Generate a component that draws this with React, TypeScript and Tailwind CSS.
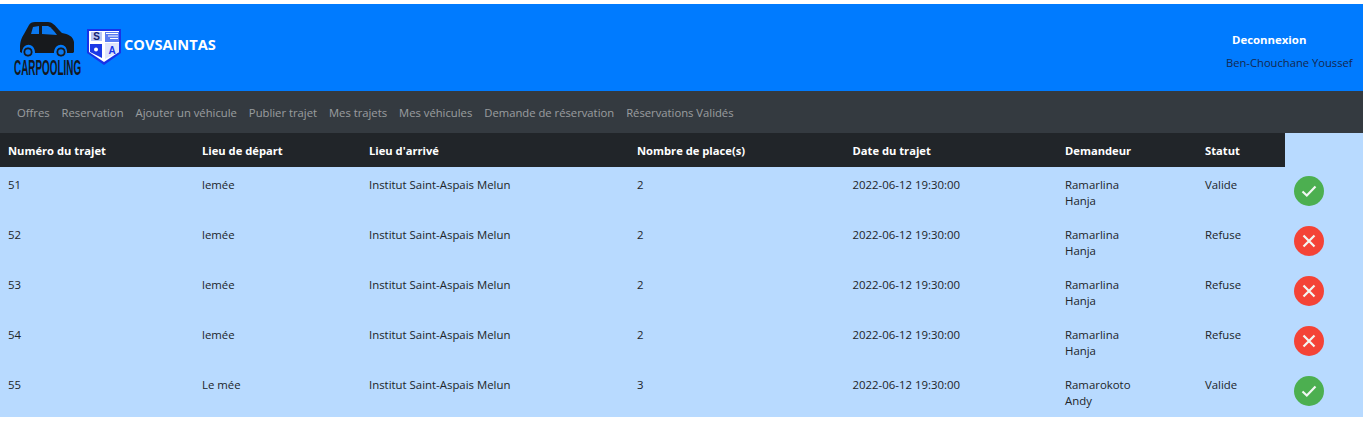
import React from "react";

const navLinks = [
  "Offres",
  "Reservation",
  "Ajouter un véhicule",
  "Publier trajet",
  "Mes trajets",
  "Mes véhicules",
  "Demande de réservation",
  "Réservations Validés",
];

const headers = [
  "Numéro du trajet",
  "Lieu de départ",
  "Lieu d'arrivé",
  "Nombre de place(s)",
  "Date du trajet",
  "Demandeur",
  "Statut",
];

const rows = [
  { id: 51, from: "lemée", seats: 2, first: "Ramarlina", last: "Hanja", status: "Valide" },
  { id: 52, from: "lemée", seats: 2, first: "Ramarlina", last: "Hanja", status: "Refuse" },
  { id: 53, from: "lemée", seats: 2, first: "Ramarlina", last: "Hanja", status: "Refuse" },
  { id: 54, from: "lemée", seats: 2, first: "Ramarlina", last: "Hanja", status: "Refuse" },
  { id: 55, from: "Le mée", seats: 3, first: "Ramarokoto", last: "Andy", status: "Valide" },
];

function CarLogo() {
  return (
    <div className="relative h-[56px] w-[68px]">
      <svg width="56" height="38" viewBox="0 0 56 38" className="absolute top-0 left-[6px]">
        <path
          d="M0 26 C0 19 2 15 4 12 L9 3 C10 1 12 0 15 0 L28 0 C32 0 35 3 39 8 L42 11 C48 12 53 14 54 20 L54 30 L53 31 L47 31 C48 20 34 20 34 31 L15 31 C15 20 2 20 2 31 L0 30 Z"
          fill="#17191c"
        />
        <path d="M13 5 L19 4 L19 12 L11 12 Z" fill="#0a78f0" />
        <path d="M22 4 L28 4 C31 5 34 9 37 13 L22 12 Z" fill="#0a78f0" />
        <circle cx="8" cy="30" r="5" fill="#17191c" stroke="#0a78f0" strokeWidth="1" />
        <circle cx="8" cy="30" r="3.5" fill="#0a78f0" stroke="#17191c" strokeWidth="1.5" />
        <circle cx="41" cy="30" r="5" fill="#17191c" stroke="#0a78f0" strokeWidth="1" />
        <circle cx="41" cy="30" r="3.5" fill="#0a78f0" stroke="#17191c" strokeWidth="1.5" />
      </svg>
      <span className="absolute top-[35px] left-0 origin-left scale-x-[0.45] font-['Liberation_Sans',sans-serif] text-[22px] leading-[22px] font-bold whitespace-nowrap text-[#14181f]">
        CARPOOLING
      </span>
    </div>
  );
}

function ShieldLogo() {
  return (
    <svg width="36" height="38" viewBox="0 0 36 38">
      <path d="M1 1 L35 1 L35 25 L18 37 L1 25 Z" fill="#1733e8" />
      <path d="M3 3 L33 3 L33 24 L18 34 L3 24 Z" fill="#fff" />
      <path d="M5 4 L16 4 L16 13 L5 13 Z" fill="#b9c6f5" />
      <path d="M19 4 L33 4 L33 14 L19 14 Z" fill="#5a7cf2" />
      <path d="M4 16 L16 16 L16 30 L4 24 Z" fill="#1b38e6" />
      <path d="M19 15 L33 15 L33 24 L19 31 Z" fill="#dfe4fb" />
      <path d="M20 5.5 H32 M22 8 H32 M24 10.5 H32" stroke="#fff" strokeWidth="1" />
      <text x="10.5" y="12" textAnchor="middle" fontSize="10" fontWeight="700" fill="#10206e" fontFamily="Liberation Sans">S</text>
      <text x="26" y="26" textAnchor="middle" fontSize="10" fontWeight="700" fill="#1733e8" fontFamily="Liberation Sans">A</text>
      <circle cx="10" cy="21.5" r="2" fill="#fff" />
    </svg>
  );
}

function StatusIcon({ status }: { status: string }) {
  const ok = status === "Valide";
  return (
    <div
      className={`flex h-[30px] w-[30px] items-center justify-center rounded-full ${ok ? "bg-[#4caf50]" : "bg-[#f44336]"}`}
    >
      <svg width="18" height="18" viewBox="0 0 18 18" fill="none" stroke="#f2f7f2" strokeWidth="2.2">
        {ok ? <path d="M2.5 9.5 L6.8 13.5 L15.5 4.5" /> : <path d="M3.5 3.5 L14.5 14.5 M14.5 3.5 L3.5 14.5" />}
      </svg>
    </div>
  );
}

export default function App() {
  return (
    <div className="min-h-[423px] bg-white pt-1 font-['Open_Sans',sans-serif] text-[11.4px]">
      <header className="flex h-[87px] items-center justify-between bg-[#007bff]">
        <div className="flex items-center">
          <div className="mt-[5px] ml-[14px]">
            <CarLogo />
          </div>
          <div className="mt-[-1px] ml-[4px]">
            <ShieldLogo />
          </div>
          <span className="mb-[6px] ml-[2px] text-[14.6px] font-bold text-white">COVSAINTAS</span>
        </div>
        <div className="flex w-[137px] flex-col gap-[7px] pt-[8px] pr-[10px]">
          <a className="pl-[6px] text-[11.4px] leading-4 font-bold text-white">Deconnexion</a>
          <span className="text-[11.2px] leading-4 whitespace-nowrap text-[#14284f]">Ben-Chouchane Youssef</span>
        </div>
      </header>

      <nav className="flex h-[42px] items-center gap-3 bg-[#343a40] pt-[3px] pl-[17px] text-[11.25px]">
        {navLinks.map((link) => (
          <a key={link} className="whitespace-nowrap text-[rgba(255,255,255,0.5)]">
            {link}
          </a>
        ))}
      </nav>

      <table className="w-full table-fixed border-collapse bg-[#b8daff] text-[#212529]">
        <colgroup>
          <col className="w-[194px]" />
          <col className="w-[167px]" />
          <col className="w-[268px]" />
          <col className="w-[215.5px]" />
          <col className="w-[212.5px]" />
          <col className="w-[140px]" />
          <col className="w-[88px]" />
          <col />
        </colgroup>
        <thead>
          <tr className="h-[34px]">
            {headers.map((h) => (
              <th key={h} className="bg-[#212529] px-2 pt-px text-left text-[11.2px] leading-4 font-bold text-white">
                {h}
              </th>
            ))}
            <th />
          </tr>
        </thead>
        <tbody>
          {rows.map((r) => (
            <tr key={r.id} className="h-[50px] align-top">
              <td className="px-2 pt-[10px] leading-4">{r.id}</td>
              <td className="px-2 pt-[10px] leading-4">{r.from}</td>
              <td className="px-2 pt-[10px] leading-4">Institut Saint-Aspais Melun</td>
              <td className="px-2 pt-[10px] leading-4">{r.seats}</td>
              <td className="px-2 pt-[10px] leading-4">2022-06-12 19:30:00</td>
              <td className="px-2 pt-[10px] leading-4">
                {r.first}
                <br />
                {r.last}
              </td>
              <td className="px-2 pt-[10px] leading-4">{r.status}</td>
              <td className="pt-[9px] pl-[9px]">
                <StatusIcon status={r.status} />
              </td>
            </tr>
          ))}
        </tbody>
      </table>
    </div>
  );
}
